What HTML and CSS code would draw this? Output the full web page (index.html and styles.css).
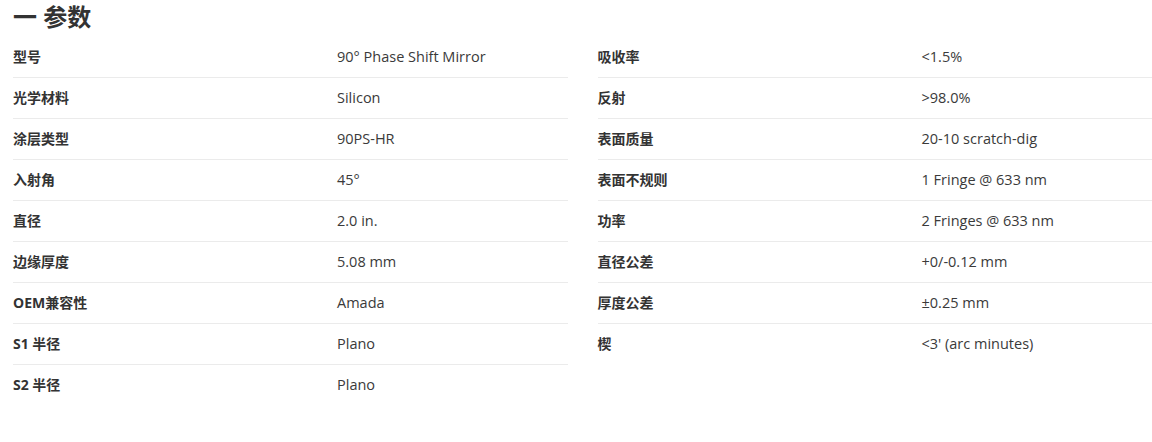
FILE: index.html
```html
<!DOCTYPE html>
<html lang="zh">
<head>
<meta charset="utf-8">
<title>参数</title>
<link rel="stylesheet" href="styles.css">
</head>
<body>
<div class="page">
  <h2 class="title">一 参数</h2>
  <div class="tables">
    <div class="table">
      <div class="row"><div class="label">型号</div><div class="value">90° Phase Shift Mirror</div></div>
      <div class="row"><div class="label">光学材料</div><div class="value">Silicon</div></div>
      <div class="row"><div class="label">涂层类型</div><div class="value">90PS-HR</div></div>
      <div class="row"><div class="label">入射角</div><div class="value">45°</div></div>
      <div class="row"><div class="label">直径</div><div class="value">2.0 in.</div></div>
      <div class="row"><div class="label">边缘厚度</div><div class="value">5.08 mm</div></div>
      <div class="row"><div class="label">OEM兼容性</div><div class="value">Amada</div></div>
      <div class="row"><div class="label">S1 半径</div><div class="value">Plano</div></div>
      <div class="row"><div class="label">S2 半径</div><div class="value">Plano</div></div>
    </div>
    <div class="table">
      <div class="row"><div class="label">吸收率</div><div class="value">&lt;1.5%</div></div>
      <div class="row"><div class="label">反射</div><div class="value">&gt;98.0%</div></div>
      <div class="row"><div class="label">表面质量</div><div class="value">20-10 scratch-dig</div></div>
      <div class="row"><div class="label">表面不规则</div><div class="value">1 Fringe @ 633 nm</div></div>
      <div class="row"><div class="label">功率</div><div class="value">2 Fringes @ 633 nm</div></div>
      <div class="row"><div class="label">直径公差</div><div class="value">+0/-0.12 mm</div></div>
      <div class="row"><div class="label">厚度公差</div><div class="value">±0.25 mm</div></div>
      <div class="row"><div class="label">楔</div><div class="value">&lt;3' (arc minutes)</div></div>
    </div>
  </div>
</div>
</body>
</html>
```
FILE: styles.css
```css
html, body {
  margin: 0;
  padding: 0;
  background: #ffffff;
}
body {
  font-family: "Open Sans", "Noto Sans CJK SC", sans-serif;
  color: #333333;
}
.page {
  padding-left: 13px;
}
.title {
  margin: 0;
  height: 37px;
  line-height: 34px;
  font-size: 24px;
  font-weight: 700;
  color: #333333;
}
.tables {
  display: grid;
  grid-template-columns: 1fr 1fr;
  column-gap: 30px;
  align-items: start;
}
.row {
  display: grid;
  grid-template-columns: 324px 1fr;
  align-items: center;
  padding-bottom: 1px;
  box-sizing: content-box;
  height: 39px;
  border-bottom: 1px solid #ebebeb;
}
.row:last-child {
  border-bottom: none;
}
.label {
  font-size: 14px;
  line-height: 20px;
  font-weight: 700;
  color: #333333;
}
.value {
  font-size: 14.5px;
  line-height: 20px;
  color: #3a3a3a;
}
```
